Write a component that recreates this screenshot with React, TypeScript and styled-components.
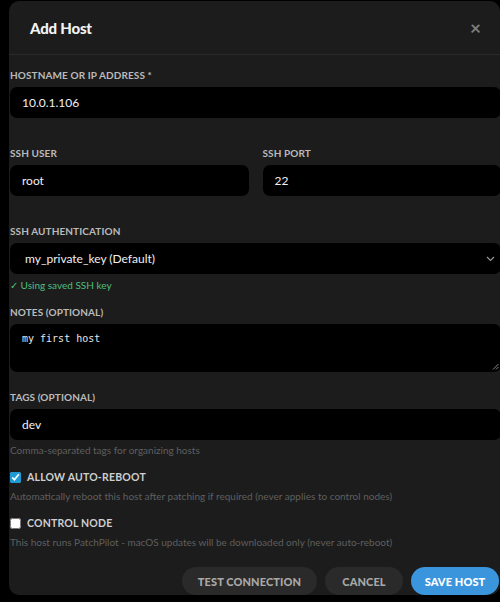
import React from "react";
import styled, { createGlobalStyle } from "styled-components";

const Global = createGlobalStyle`
  html, body { margin: 0; padding: 0; background: #000; overflow: hidden; }
  body { font-family: Lato, "Open Sans", sans-serif; }
  * { box-sizing: border-box; }
`;

const Page = styled.div`
  width: 500px;
  height: 602px;
  padding: 1px 0 0 9px;
  background: #000;
  overflow: hidden;
`;

const Panel = styled.div`
  width: 491px;
  height: 594px;
  background: #1c1c1c;
  border-radius: 10px;
  display: flex;
  flex-direction: column;
`;

const Header = styled.div`
  height: 54px;
  flex: none;
  display: flex;
  align-items: center;
  justify-content: space-between;
  padding: 0 19px 0 21px;
  border-bottom: 1px solid #2a2a2a;
`;

const Title = styled.h2`
  margin: 0;
  font-size: 15px;
  font-weight: 900;
  color: #f2f2f2;
  letter-spacing: -0.2px;
`;

const Close = styled.span`
  color: #7d7d7d;
  font-size: 19px;
  line-height: 1;
  font-weight: 700;
`;

const Body = styled.div`
  width: 492px;
  padding: 13px 0 0 1px;
  display: flex;
  flex-direction: column;
  flex: 1;
`;

const Field = styled.div<{ $mb: number }>`
  display: flex;
  flex-direction: column;
  margin-bottom: ${(p) => p.$mb}px;
`;

const Label = styled.label`
  font-size: 10px;
  line-height: 14px;
  font-weight: 700;
  color: #bababa;
  letter-spacing: 0.1px;
  text-transform: uppercase;
  margin-bottom: 5px;
`;

const TextInput = styled.div`
  height: 31px;
  background: #000;
  border-radius: 7px;
  display: flex;
  align-items: center;
  padding: 0 12px;
  color: #f0f0f0;
  font-size: 12px;
`;

const SelectBox = styled(TextInput)`
  padding: 0 6px 0 15px;
  justify-content: space-between;
`;

const NotesArea = styled.div`
  position: relative;
  height: 48px;
  background: #000;
  border-radius: 7px;
  padding: 9px 12px;
  color: #e8e8e8;
  font-family: "DejaVu Sans Mono", monospace;
  font-size: 10px;
  line-height: 12px;
`;

const Grip = styled.svg`
  position: absolute;
  right: 2px;
  bottom: 2px;
`;

const Row = styled.div`
  display: grid;
  grid-template-columns: 1fr 1fr;
  column-gap: 14px;
`;

const Hint = styled.div<{ $color?: string; $mt?: number }>`
  font-size: 10px;
  line-height: 14px;
  color: ${(p) => p.$color || "#5f5f5f"};
  margin-top: ${(p) => p.$mt ?? 3}px;
`;

const CheckRow = styled.label`
  display: flex;
  align-items: center;
  gap: 6px;
  height: 14px;
`;

const Box = styled.input`
  width: 11px;
  height: 11px;
  margin: 0;
  accent-color: #1d9ad6;
`;

const CheckText = styled.span`
  font-size: 10.5px;
  font-weight: 700;
  color: #cfcfcf;
  letter-spacing: 0.2px;
`;

const CheckBlock = styled.div<{ $mb: number }>`
  display: flex;
  flex-direction: column;
  margin-bottom: ${(p) => p.$mb}px;
`;

const Footer = styled.div`
  display: flex;
  justify-content: flex-end;
  gap: 8px;
  padding-right: 1px;
  margin-top: auto;
`;

const Button = styled.button<{ $primary?: boolean; $w: number }>`
  width: ${(p) => p.$w}px;
  height: 28px;
  border: none;
  border-radius: 14px;
  background: ${(p) => (p.$primary ? "#3a95dd" : "#2a2a2a")};
  color: ${(p) => (p.$primary ? "#ffffff" : "#a9a9a9")};
  font-family: Lato, sans-serif;
  font-size: 11px;
  font-weight: 900;
  letter-spacing: 0.1px;
  text-transform: uppercase;
  padding: 0;
`;

export default function App() {
  return (
    <>
      <Global />
      <Page>
        <Panel>
          <Header>
            <Title>Add Host</Title>
            <Close>×</Close>
          </Header>
          <Body>
            <Field $mb={28}>
              <Label>Hostname or IP Address *</Label>
              <TextInput>10.0.1.106</TextInput>
            </Field>
            <Row>
              <Field $mb={28}>
                <Label>SSH User</Label>
                <TextInput>root</TextInput>
              </Field>
              <Field $mb={28}>
                <Label>SSH Port</Label>
                <TextInput>22</TextInput>
              </Field>
            </Row>
            <Field $mb={13}>
              <Label>SSH Authentication</Label>
              <SelectBox>
                <span>my_private_key (Default)</span>
                <svg width="9" height="6" viewBox="0 0 9 6">
                  <path d="M1 1l3.5 3.5L8 1" fill="none" stroke="#9a9a9a" strokeWidth="1.1" />
                </svg>
              </SelectBox>
              <Hint $color="#4fbf7f" $mt={4}>✓ Using saved SSH key</Hint>
            </Field>
            <Field $mb={18}>
              <Label>Notes (Optional)</Label>
              <NotesArea>
                my first host
                <Grip width="7" height="7" viewBox="0 0 7 7">
                  <path d="M6.5 1L1 6.5M6.5 4L4 6.5" stroke="#8a8a8a" strokeWidth="1" />
                </Grip>
              </NotesArea>
            </Field>
            <Field $mb={13}>
              <Label>Tags (Optional)</Label>
              <TextInput>dev</TextInput>
              <Hint>Comma-separated tags for organizing hosts</Hint>
            </Field>
            <CheckBlock $mb={13}>
              <CheckRow>
                <Box type="checkbox" defaultChecked />
                <CheckText>ALLOW AUTO-REBOOT</CheckText>
              </CheckRow>
              <Hint $mt={5}>Automatically reboot this host after patching if required (never applies to control nodes)</Hint>
            </CheckBlock>
            <CheckBlock $mb={0}>
              <CheckRow>
                <Box type="checkbox" />
                <CheckText>CONTROL NODE</CheckText>
              </CheckRow>
              <Hint $mt={5}>This host runs PatchPilot - macOS updates will be downloaded only (never auto-reboot)</Hint>
            </CheckBlock>
          </Body>
          <Footer>
            <Button $w={135}>Test Connection</Button>
            <Button $w={78}>Cancel</Button>
            <Button $primary $w={88}>Save Host</Button>
          </Footer>
        </Panel>
      </Page>
    </>
  );
}
